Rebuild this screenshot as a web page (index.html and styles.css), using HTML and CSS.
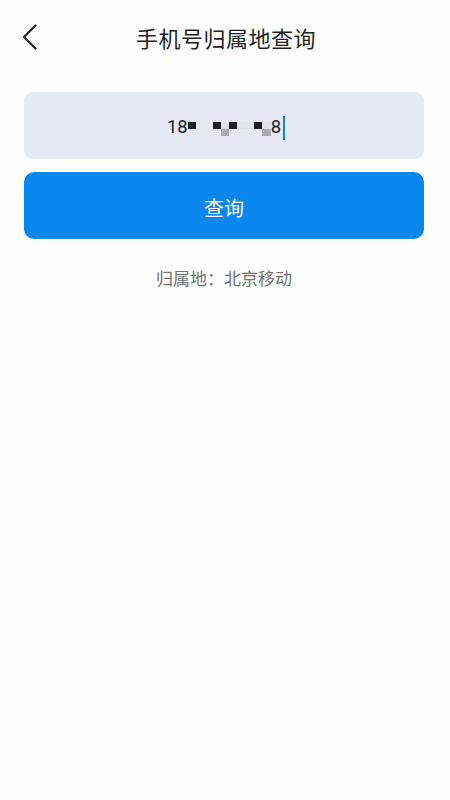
FILE: index.html
```html
<!DOCTYPE html>
<html lang="zh-CN">
<head>
<meta charset="utf-8">
<title>手机号归属地查询</title>
<link rel="stylesheet" href="styles.css">
</head>
<body>
<div class="page">
  <header class="topbar">
    <div class="back">
      <svg width="16" height="26" viewBox="0 0 16 26" aria-hidden="true">
        <polyline points="13.5,1.5 2,13 13.5,24.5" fill="none" stroke="#2b2b2b" stroke-width="2.3" stroke-linecap="round" stroke-linejoin="round"/>
      </svg>
    </div>
    <h1 class="title">手机号归属地查询</h1>
    <div class="spacer"></div>
  </header>
  <main class="content">
    <div class="input-box">
      <div class="digits">
        <span class="num">18</span>
        <span class="mosaic">
          <i class="c k"></i><i class="c"></i><i class="c"></i><i class="c k"></i><i class="c f"></i><i class="c k"></i><i class="c f"></i><i class="c f"></i><i class="c k"></i><i class="c f"></i>
          <i class="c"></i><i class="c"></i><i class="c"></i><i class="c"></i><i class="c g"></i><i class="c"></i><i class="c"></i><i class="c"></i><i class="c"></i><i class="c g"></i>
        </span>
        <span class="num">8</span>
        <span class="cursor"></span>
      </div>
    </div>
    <button class="query-btn" type="button">查询</button>
    <p class="result">归属地：北京移动</p>
  </main>
</div>
</body>
</html>
```
FILE: styles.css
```css
* { box-sizing: border-box; }
html, body {
  margin: 0;
  padding: 0;
  background: #fdfdfe;
}
body {
  font-family: "Noto Sans CJK SC", "Noto Sans", Roboto, sans-serif;
  color: #222;
}
.page {
  width: 450px;
  min-height: 800px;
}
.topbar {
  height: 74px;
  display: grid;
  grid-template-columns: 60px 1fr 60px;
  align-items: center;
}
.back {
  padding-left: 22px;
  display: flex;
  align-items: center;
  height: 26px;
  margin-top: -1px;
}
.title {
  margin: 0;
  text-align: center;
  font-size: 22px;
  font-weight: 400;
  letter-spacing: 0.5px;
  color: #1f1f1f;
  line-height: 1;
  margin-top: -1px;
  margin-left: 2px;
}
.content {
  margin: 18px 26px 0 24px;
  display: flex;
  flex-direction: column;
}
.input-box {
  height: 67px;
  background: #e5e9f4;
  border-radius: 9px;
  display: flex;
  align-items: center;
  justify-content: center;
  padding-top: 4px;
}
.digits {
  display: flex;
  align-items: center;
  margin-left: 4px;
}
.num {
  font-family: Roboto, "Noto Sans", sans-serif;
  font-size: 18.5px;
  color: #1c1c1c;
  line-height: 1;
}
.mosaic {
  display: grid;
  grid-template-columns: repeat(10, 8.3px);
  grid-template-rows: 7px 7px;
  margin-top: 2px;
}
.c { display: block; }
.c.k { background: #1e1f24; }
.c.f { background: #dfe3ec; }
.c.g { background: #a9abb1; }
.cursor {
  width: 2px;
  height: 24px;
  background: #1b7fd9;
  margin-left: 2px;
}
.query-btn {
  margin-top: 13px;
  height: 67px;
  border: none;
  border-radius: 10px;
  background: #0a86ef;
  color: #fff;
  font-family: "Noto Sans CJK SC", sans-serif;
  font-size: 20px;
  padding: 3px 0 0;
}
.result {
  margin: 27px 0 0;
  text-align: center;
  font-size: 17px;
  color: #707070;
  line-height: 24px;
}
```
